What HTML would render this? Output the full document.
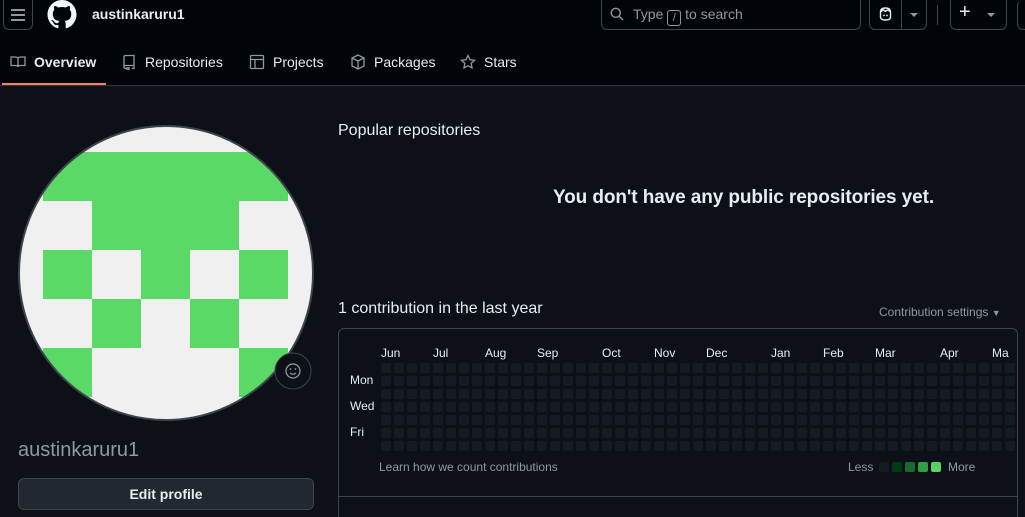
<!DOCTYPE html>
<html style="overflow:hidden;height:517px"><head><meta charset="utf-8"><style>
*{box-sizing:border-box;margin:0;padding:0}
body{width:1025px;height:517px;overflow:hidden;background:#0d1117;font-family:"Liberation Sans",sans-serif;color:#e6edf3;position:relative}
.a{position:absolute}
.hdr{left:0;top:0;width:1025px;height:86px;background:#010409;border-bottom:1px solid #30363d}
.btn{border:1px solid #3d444d;border-radius:6px}
.tab{top:54px;font-size:14px;color:#e6edf3;display:flex;align-items:center;gap:8px}
.tab svg{stroke:#9198a1;fill:none;stroke-width:1.3}
.cell{position:absolute;width:10px;height:10px;border-radius:2px;background:#151b23}
.mon{position:absolute;top:346px;font-size:12px;color:#e6edf3}
.day{position:absolute;left:350px;font-size:12px;color:#e6edf3}
</style></head><body>
<div class="a hdr"></div>
<div class="a btn" style="left:3px;top:0;width:30px;height:30px;border-top:none;border-radius:0 0 6px 6px"></div>
<div class="a" style="left:11px;top:9px;width:14px;height:1.5px;background:#9198a1;box-shadow:0 5px 0 #9198a1,0 10px 0 #9198a1"></div>
<svg class="a" style="left:47px;top:0" width="30" height="29" viewBox="0 0 16 16"><path fill="#f0f6fc" d="M8 0C3.580 0 0 3.58 0 8c0 3.54 2.29 6.53 5.47 7.59.4.07.55-.17.55-.38 0-.19-.01-.82-.01-1.49-2.010.37-2.530-.49-2.690-.94-.09-.23-.48-.94-.82-1.13-.28-.15-.68-.52-.01-.53.63-.01 1.080.58 1.230.82.72 1.210 1.870.87 2.330.66.07-.52.28-.87.51-1.07-1.78-.2-3.64-.89-3.64-3.95 0-.87.31-1.590.82-2.150-.08-.2-.36-1.020.08-2.120 0 0 .67-.21 2.200.82.64-.18 1.320-.27 2-.27.68 0 1.360.09 2 .27 1.530-1.040 2.200-.82 2.200-.82.44 1.100.16 1.920.08 2.120.51.56.82 1.270.82 2.150 0 3.070-1.870 3.750-3.650 3.950.29.25.54.73.54 1.480 0 1.070-.01 1.930-.01 2.200 0 .21.15.46.55.38A8.013 8.013 0 0016 8c0-4.42-3.58-8-8-8z"/></svg>
<div class="a" style="left:92px;top:6px;font-size:14px;font-weight:bold">austinkaruru1</div>
<div class="a btn" style="left:601px;top:0;width:260px;height:30px;border-top:none;border-radius:0 0 6px 6px"></div>
<svg class="a" style="left:610px;top:7px" width="14" height="14" viewBox="0 0 14 14"><circle cx="5.8" cy="5.8" r="4.5" stroke="#9198a1" stroke-width="1.4" fill="none"/><path d="M9.2 9.2L13 13" stroke="#9198a1" stroke-width="1.4"/></svg>
<div class="a" style="left:633px;top:6px;font-size:14px;color:#9198a1">Type <span style="display:inline-block;border:1px solid #9198a1;border-radius:3px;width:14px;height:16px;font-size:11px;text-align:center;line-height:14px;vertical-align:-2px">/</span> to search</div>
<div class="a btn" style="left:869px;top:0;width:58px;height:30px;border-top:none;border-radius:0 0 6px 6px"></div>
<div class="a" style="left:901px;top:0;width:1px;height:29px;background:#3d444d"></div>
<svg class="a" style="left:877px;top:6px" width="17" height="16" viewBox="0 0 16 16"><path d="M3 6c0-3 2-4 5-4s5 1 5 4v5c0 2-2 3-5 3s-5-1-5-3z M8 6c0-2 4-3 4 0M8 6c0-2-4-3-4 0" stroke="#e6edf3" stroke-width="1.4" fill="none"/><circle cx="6.5" cy="9.5" r=".9" fill="#e6edf3"/><circle cx="9.5" cy="9.5" r=".9" fill="#e6edf3"/></svg>
<div class="a" style="left:910px;top:13px;border:4px solid transparent;border-top-color:#9198a1"></div>
<div class="a" style="left:937px;top:5px;width:1px;height:20px;background:#3d444d"></div>
<div class="a btn" style="left:950px;top:0;width:57px;height:30px;border-top:none;border-radius:0 0 6px 6px"></div>
<div class="a" style="left:959px;top:1px;font-size:20px;color:#e6edf3">+</div>
<div class="a" style="left:987px;top:13px;border:4px solid transparent;border-top-color:#9198a1"></div>
<div class="a btn" style="left:1017px;top:0;width:20px;height:30px;border-top:none"></div>

<div class="a tab" style="left:10px;font-weight:bold"><svg width="16" height="16" viewBox="0 0 16 16"><path d="M1 3h4.5c1.3 0 2.5.8 2.5 2v8c0-1-1-1.5-2-1.5H1zM15 3h-4.5C9.2 3 8 3.8 8 5v8c0-1 1-1.5 2-1.5h5z"/></svg>Overview</div>
<div class="a" style="left:2px;top:83px;width:104px;height:2px;background:#f78166"></div>
<div class="a tab" style="left:121px"><svg width="16" height="16" viewBox="0 0 16 16"><path d="M3 13V3c0-1 .5-1.5 1.5-1.5H13v10H4.5C3.5 11.5 3 12 3 13s.5 1.5 1.5 1.5H6M13 11.5v3h-2M6 13v2.5l1-1 1 1V13"/></svg>Repositories</div>
<div class="a tab" style="left:249px"><svg width="16" height="16" viewBox="0 0 16 16"><rect x="1.5" y="1.5" width="13" height="13" rx="1"/><path d="M1.5 5.5h13M6 5.5v9"/></svg>Projects</div>
<div class="a tab" style="left:350px"><svg width="16" height="16" viewBox="0 0 16 16"><path d="M8 1l6 3v8l-6 3-6-3V4zM2 4l6 3 6-3M8 7v8"/></svg>Packages</div>
<div class="a tab" style="left:460px"><svg width="16" height="16" viewBox="0 0 16 16"><path d="M8 1.5l2 4.2 4.5.6-3.3 3.1.8 4.5L8 11.7l-4 2.2.8-4.5L1.5 6.3 6 5.7z"/></svg>Stars</div>

<svg class="a" style="left:17px;top:124px" width="299" height="299" viewBox="17 124 299 299">
<defs><clipPath id="c"><circle cx="166" cy="273" r="147"/></clipPath></defs>
<g clip-path="url(#c)"><rect x="0" y="100" width="340" height="340" fill="#f0f0f0"/>
<g fill="#5bd966"><rect x="43" y="152" width="245" height="49"/><rect x="92" y="201" width="147" height="49"/><rect x="43" y="250" width="49" height="49"/><rect x="141" y="250" width="49" height="49"/><rect x="239" y="250" width="49" height="49"/><rect x="92" y="299" width="49" height="49"/><rect x="190" y="299" width="49" height="49"/><rect x="43" y="348" width="49" height="49"/><rect x="239" y="348" width="49" height="49"/></g></g>
<circle cx="166" cy="273" r="147" fill="none" stroke="#3d444d" stroke-width="2"/>
<circle cx="293" cy="371" r="18" fill="#0d1117" stroke="#3d444d"/>
<circle cx="293" cy="371" r="7" fill="none" stroke="#9198a1" stroke-width="1.3"/>
<circle cx="290.5" cy="369" r=".9" fill="#9198a1"/><circle cx="295.5" cy="369" r=".9" fill="#9198a1"/>
<path d="M290 373q3 2.5 6 0" stroke="#9198a1" stroke-width="1.2" fill="none"/>
</svg>
<div class="a" style="left:18px;top:439px;font-size:20px;color:#9198a1">austinkaruru1</div>
<div class="a" style="left:18px;top:478px;width:296px;height:32px;background:#212830;border:1px solid #3d444d;border-radius:6px;font-size:14px;font-weight:bold;text-align:center;line-height:30px">Edit profile</div>

<div class="a" style="left:338px;top:122px;font-size:16px">Popular repositories</div>
<div class="a" style="left:553px;top:187px;font-size:19px;font-weight:bold;letter-spacing:-0.1px">You don't have any public repositories yet.</div>
<div class="a" style="left:338px;top:300px;font-size:16px">1 contribution in the last year</div>
<div class="a" style="left:879px;top:305px;font-size:12px;color:#9198a1">Contribution settings <span style="font-size:9px">▼</span></div>
<div class="a" style="left:338px;top:328px;width:680px;height:189px;border:1px solid #3d444d;border-bottom:none;border-radius:6px 6px 0 0"></div>
<div class="a" style="left:339px;top:496px;width:678px;height:1px;background:#3d444d"></div>
<div id="g"></div>
<div class="mon" style="left:381px">Jun</div><div class="mon" style="left:433px">Jul</div><div class="mon" style="left:485px">Aug</div><div class="mon" style="left:537px">Sep</div><div class="mon" style="left:602px">Oct</div><div class="mon" style="left:654px">Nov</div><div class="mon" style="left:706px">Dec</div><div class="mon" style="left:771px">Jan</div><div class="mon" style="left:823px">Feb</div><div class="mon" style="left:875px">Mar</div><div class="mon" style="left:940px">Apr</div><div class="mon" style="left:992px">Ma</div>
<div class="day" style="top:373px">Mon</div><div class="day" style="top:399px">Wed</div><div class="day" style="top:425px">Fri</div>
<div class="a" style="left:379px;top:460px;font-size:12px;color:#9198a1">Learn how we count contributions</div>
<div class="a" style="left:848px;top:460px;font-size:12px;color:#9198a1">Less</div>
<div class="cell" style="left:879px;top:462px"></div><div class="cell" style="left:892px;top:462px;background:#033a16"></div><div class="cell" style="left:905px;top:462px;background:#196c2e"></div><div class="cell" style="left:918px;top:462px;background:#2ea043"></div><div class="cell" style="left:931px;top:462px;background:#56d364"></div>
<div class="a" style="left:948px;top:460px;font-size:12px;color:#9198a1">More</div>
<script>
var h='';for(var c=0;c<49;c++)for(var r=0;r<7;r++){var x=381+c*13;if(x>1012)continue;h+='<div class="cell" style="left:'+x+'px;top:'+(363+r*13)+'px"></div>';}
document.getElementById('g').innerHTML=h;
</script>
</body></html>
